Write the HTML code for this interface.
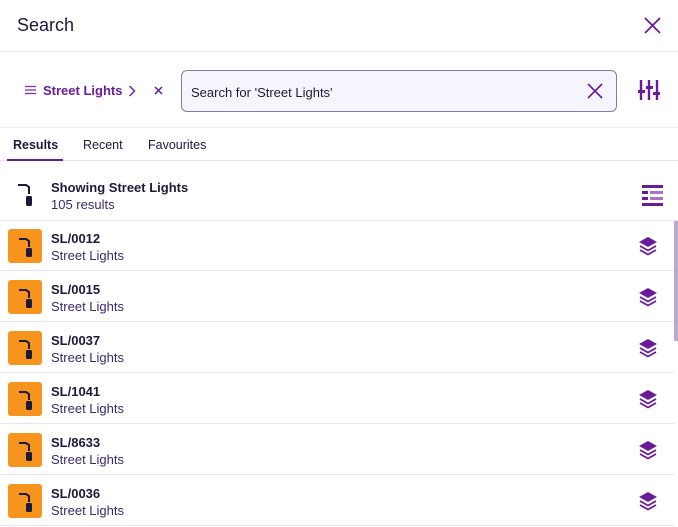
<!DOCTYPE html>
<html><head><style>
*{margin:0;padding:0;box-sizing:border-box}
body{width:678px;height:527px;overflow:hidden;background:#fff;font-family:"Liberation Sans",sans-serif;position:relative;color:#1c1a3a}
.abs{position:absolute}
.hr{position:absolute;left:0;width:678px;height:1px;background:#e8e4f4}
.row{position:absolute;left:0;width:674px;height:51px;border-bottom:1px solid #e8e4f4}
.ib{position:absolute;left:8px;top:9px;width:34px;height:34px;background:#f7941d;border-radius:3px}
.t1{position:absolute;left:51px;top:11px;font-size:13px;font-weight:bold;color:#1c1a3a}
.t2{position:absolute;left:51px;top:28px;font-size:13px;color:#3a2a6a}
.ly{position:absolute;left:638px;top:16px}
</style></head><body>
<div class="abs" style="left:17px;top:15px;font-size:18px;color:#1c1a3a">Search</div>
<svg class="abs" style="left:644px;top:17px" width="17" height="17" viewBox="0 0 17 17"><path d="M1 1L16 16M16 1L1 16" stroke="#6a1b9a" stroke-width="1.8"/></svg>
<div class="hr" style="top:51px"></div>
<svg class="abs" style="left:25px;top:85px" width="12" height="10"><path d="M0 1.5h11M0 5h11M0 8.5h11" stroke="#7b2cbf" stroke-width="1.3"/></svg>
<div class="abs" style="left:43px;top:83px;font-size:13px;font-weight:bold;color:#6a1b9a">Street Lights</div>
<svg class="abs" style="left:128px;top:85px" width="8" height="12"><path d="M1.5 1l5 5-5 5" stroke="#6a1b9a" stroke-width="1.4" fill="none"/></svg>
<svg class="abs" style="left:154px;top:86px" width="9" height="9"><path d="M1 1l7 7M8 1l-7 7" stroke="#6a1b9a" stroke-width="1.5"/></svg>
<div class="abs" style="left:181px;top:70px;width:436px;height:42px;border:1px solid #8a76b0;border-radius:6px;background:#f6f5fd"></div>
<div class="abs" style="left:191px;top:85px;font-size:13px;color:#1c1a3a">Search for 'Street Lights'</div>
<svg class="abs" style="left:587px;top:83px" width="16" height="16"><path d="M1 1l14 14M15 1L1 15" stroke="#6a1b9a" stroke-width="1.6"/></svg>
<svg class="abs" style="left:638px;top:79px" width="22" height="22" viewBox="0 0 22 22"><g stroke="#6a1b9a" stroke-width="2.4"><path d="M3 1v20M11 1v20M19 1v20"/></g><g fill="#6a1b9a"><rect x="0" y="11" width="7" height="3"/><rect x="8" y="7" width="7" height="3"/><rect x="15" y="13" width="7" height="3"/></g></svg>
<div class="hr" style="top:127px;background:#eeeaf8"></div>
<div class="abs" style="left:13px;top:138px;font-size:12.5px;font-weight:bold;color:#1c1a3a">Results</div>
<div class="abs" style="left:83px;top:138px;font-size:12.5px;color:#1c1a3a">Recent</div>
<div class="abs" style="left:148px;top:138px;font-size:12.5px;color:#1c1a3a">Favourites</div>
<div class="hr" style="top:160px;background:#e3ddf5"></div>
<div class="abs" style="left:7px;top:159px;width:56px;height:2px;background:#6a1b9a"></div>
<svg class="abs" style="left:17px;top:183px" width="18" height="24" viewBox="0 0 18 24"><path d="M1 2h8l3 2v7" stroke="#1c1a3a" stroke-width="2" fill="none"/><rect x="9" y="13" width="6" height="10" rx="1.5" fill="#1c1a3a"/></svg>
<div class="abs" style="left:51px;top:180px;font-size:13px;font-weight:bold">Showing Street Lights</div>
<div class="abs" style="left:51px;top:197px;font-size:13px;color:#3a2a6a">105 results</div>
<svg class="abs" style="left:642px;top:185px" width="21" height="21" viewBox="0 0 21 21"><g fill="#6a1b9a"><rect x="0" y="0" width="21" height="3"/><rect x="0" y="6" width="6" height="3"/><rect x="8" y="6" width="13" height="3" opacity=".6"/><rect x="0" y="12" width="6" height="3"/><rect x="8" y="12" width="13" height="3" opacity=".6"/><rect x="0" y="18" width="21" height="3"/></g></svg>
<div class="hr" style="top:220px"></div>
<div class="abs" style="left:674px;top:221px;width:4px;height:120px;background:#b9a8d6"></div>
<div style="position:absolute;left:0;top:220px">
<!-- rows -->
</div>
<div class="row" style="top:220px"><div class="ib"><svg width="34" height="34"><path d="M11 10h7l3 2v6" stroke="#1c1a3a" stroke-width="2" fill="none"/><rect x="18" y="19" width="6" height="9" rx="1.5" fill="#1c1a3a"/></svg></div><div class="t1">SL/0012</div><div class="t2">Street Lights</div><svg class="ly" width="20" height="20" viewBox="0 0 20 20"><path d="M10 1l9 5-9 5-9-5z" fill="#6a1b9a"/><path d="M2 10l8 4.5 8-4.5M2 14l8 4.5 8-4.5" stroke="#6a1b9a" stroke-width="1.8" fill="none"/></svg></div>
<div class="row" style="top:271px"><div class="ib"><svg width="34" height="34"><path d="M11 10h7l3 2v6" stroke="#1c1a3a" stroke-width="2" fill="none"/><rect x="18" y="19" width="6" height="9" rx="1.5" fill="#1c1a3a"/></svg></div><div class="t1">SL/0015</div><div class="t2">Street Lights</div><svg class="ly" width="20" height="20" viewBox="0 0 20 20"><path d="M10 1l9 5-9 5-9-5z" fill="#6a1b9a"/><path d="M2 10l8 4.5 8-4.5M2 14l8 4.5 8-4.5" stroke="#6a1b9a" stroke-width="1.8" fill="none"/></svg></div>
<div class="row" style="top:322px"><div class="ib"><svg width="34" height="34"><path d="M11 10h7l3 2v6" stroke="#1c1a3a" stroke-width="2" fill="none"/><rect x="18" y="19" width="6" height="9" rx="1.5" fill="#1c1a3a"/></svg></div><div class="t1">SL/0037</div><div class="t2">Street Lights</div><svg class="ly" width="20" height="20" viewBox="0 0 20 20"><path d="M10 1l9 5-9 5-9-5z" fill="#6a1b9a"/><path d="M2 10l8 4.5 8-4.5M2 14l8 4.5 8-4.5" stroke="#6a1b9a" stroke-width="1.8" fill="none"/></svg></div>
<div class="row" style="top:373px"><div class="ib"><svg width="34" height="34"><path d="M11 10h7l3 2v6" stroke="#1c1a3a" stroke-width="2" fill="none"/><rect x="18" y="19" width="6" height="9" rx="1.5" fill="#1c1a3a"/></svg></div><div class="t1">SL/1041</div><div class="t2">Street Lights</div><svg class="ly" width="20" height="20" viewBox="0 0 20 20"><path d="M10 1l9 5-9 5-9-5z" fill="#6a1b9a"/><path d="M2 10l8 4.5 8-4.5M2 14l8 4.5 8-4.5" stroke="#6a1b9a" stroke-width="1.8" fill="none"/></svg></div>
<div class="row" style="top:424px"><div class="ib"><svg width="34" height="34"><path d="M11 10h7l3 2v6" stroke="#1c1a3a" stroke-width="2" fill="none"/><rect x="18" y="19" width="6" height="9" rx="1.5" fill="#1c1a3a"/></svg></div><div class="t1">SL/8633</div><div class="t2">Street Lights</div><svg class="ly" width="20" height="20" viewBox="0 0 20 20"><path d="M10 1l9 5-9 5-9-5z" fill="#6a1b9a"/><path d="M2 10l8 4.5 8-4.5M2 14l8 4.5 8-4.5" stroke="#6a1b9a" stroke-width="1.8" fill="none"/></svg></div>
<div class="row" style="top:475px"><div class="ib"><svg width="34" height="34"><path d="M11 10h7l3 2v6" stroke="#1c1a3a" stroke-width="2" fill="none"/><rect x="18" y="19" width="6" height="9" rx="1.5" fill="#1c1a3a"/></svg></div><div class="t1">SL/0036</div><div class="t2">Street Lights</div><svg class="ly" width="20" height="20" viewBox="0 0 20 20"><path d="M10 1l9 5-9 5-9-5z" fill="#6a1b9a"/><path d="M2 10l8 4.5 8-4.5M2 14l8 4.5 8-4.5" stroke="#6a1b9a" stroke-width="1.8" fill="none"/></svg></div>
</body></html>
